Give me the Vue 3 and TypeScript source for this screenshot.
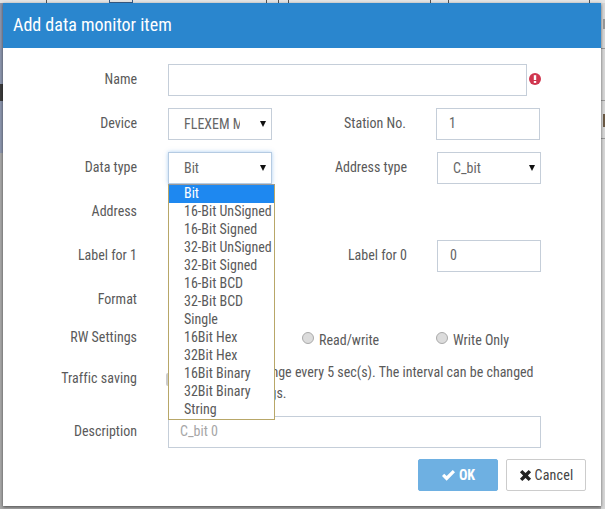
<script setup lang="ts">
// 数据类型下拉选项
const typeOptions: string[] = [
  "Bit",
  "16-Bit UnSigned",
  "16-Bit Signed",
  "32-Bit UnSigned",
  "32-Bit Signed",
  "16-Bit BCD",
  "32-Bit BCD",
  "Single",
  "16Bit Hex",
  "32Bit Hex",
  "16Bit Binary",
  "32Bit Binary",
  "String",
];

// x positions of the dark marks showing above the dialog
const topTicks: number[] = [46, 266, 278, 288, 430, 448, 589];
</script>

<template>
  <div class="page">
    <!-- slivers of the page behind the dialog -->
    <i v-for="x in topTicks" :key="x" class="bg bg-tick" :style="{ left: `${x}px` }"></i>
    <i class="bg bg-box"></i>
    <i class="bg bg-blue"></i>
    <i class="bg bg-dark"></i>
    <i class="bg bg-line line-a"></i>
    <i class="bg bg-line line-b"></i>
    <i class="bg bg-line line-c"></i>
    <i class="bg bg-mark mark-c"></i>
    <i class="bg bg-mark mark-i"></i>

    <div class="modal">
      <header class="modal-head">Add data monitor item</header>
      <div class="modal-body">
        <div class="row">
          <label class="lbl">Name</label>
          <input class="ctl name" type="text" />
          <svg class="warn" viewBox="0 0 12 12" width="12" height="12">
            <circle cx="6" cy="6" r="6" fill="#d0364f" />
            <rect x="4.8" y="2.2" width="2.4" height="4.8" fill="#fff" />
            <rect x="4.8" y="8" width="2.4" height="1.9" fill="#fff" />
          </svg>
        </div>
        <div class="row">
          <label class="lbl">Device</label>
          <div class="ctl sel small"><span class="clip device">FLEXEM MQTT</span><i class="arrow"></i></div>
          <label class="lbl lbl2">Station No.</label>
          <input class="ctl small" type="text" value="1" />
        </div>
        <div class="row">
          <label class="lbl">Data type</label>
          <div class="sel-wrap">
            <div class="ctl sel small focus"><span class="clip">Bit</span><i class="arrow"></i></div>
            <ul class="menu">
              <li v-for="(opt, i) in typeOptions" :key="opt" :class="{ on: i === 0 }">{{ opt }}</li>
            </ul>
          </div>
          <label class="lbl lbl2 shift">Address type</label>
          <div class="ctl sel small"><span class="clip">C_bit</span><i class="arrow"></i></div>
        </div>
        <div class="row">
          <label class="lbl">Address</label>
        </div>
        <div class="row">
          <label class="lbl">Label for 1</label>
          <span class="spacer"></span>
          <label class="lbl lbl2 shift">Label for 0</label>
          <input class="ctl small" type="text" value="0" />
        </div>
        <div class="row">
          <label class="lbl">Format</label>
        </div>
        <div class="row rw">
          <label class="lbl">RW Settings</label>
          <div class="radios">
            <span class="radio first"><i class="dot"></i></span>
            <span class="radio second"><i class="dot"></i>Read/write</span>
            <span class="radio"><i class="dot"></i>Write Only</span>
          </div>
        </div>
        <div class="row traffic">
          <label class="lbl">Traffic saving</label>
          <span class="check"></span>
          <p class="note">Collect data change every 5 sec(s). The interval can be changed<br />in system settings.</p>
        </div>
        <div class="row desc">
          <label class="lbl">Description</label>
          <input class="ctl wide" type="text" placeholder="C_bit 0" />
        </div>
      </div>
      <footer class="modal-foot">
        <button class="btn ok">
          <svg viewBox="0 0 16 14" width="15" height="13"><path d="M1 7.5 3.4 5 6 7.6 12.6 1 15 3.4 6 12.6z" fill="#fff" /></svg>
          OK
        </button>
        <button class="btn cancel">
          <svg viewBox="0 0 14 14" width="13" height="13"><path d="M1 3.6 3.6 1 7 4.4 10.4 1 13 3.6 9.6 7 13 10.4 10.4 13 7 9.6 3.6 13 1 10.4 4.4 7z" fill="#222" /></svg>
          Cancel
        </button>
      </footer>
    </div>
  </div>
</template>

<style>
html, body { margin: 0; background: #a8a8a8; }
</style>

<style scoped>
.page {
  position: relative;
  width: 605px;
  height: 509px;
  padding: 3px 4px 3px 3px;
  box-sizing: border-box;
  overflow: hidden;
  font-family: Roboto, "Liberation Sans", sans-serif;
  font-stretch: condensed;
  font-size: 14px;
  color: #5a5a5a;
  background: linear-gradient(#e4e4e4 0 3px, transparent 3px),
    linear-gradient(90deg, transparent 601px, #d6d6d6 601px);
}
.bg { position: absolute; display: block; }
.bg-tick { top: 0; width: 1px; height: 3px; background: #555; }
.bg-box { top: 0; left: 109px; width: 24px; height: 3px; box-sizing: border-box; border: 1px solid #3a5f8a; border-top: 0; }
.bg-blue { left: 0; top: 3px; width: 3px; height: 150px; background: #8c96ad; }
.bg-dark { left: 0; top: 84px; width: 3px; height: 17px; background: #3c3c3c; }
.bg-line { left: 601px; width: 4px; height: 1px; background: #999; }
.line-a { top: 48px; }
.line-b { top: 100px; }
.line-c { top: 138px; }
.bg-mark { left: 603px; width: 2px; background: #6b5a45; }
.mark-c { top: 19px; height: 10px; background: #999; }
.mark-i { top: 114px; height: 13px; }
.modal {
  position: relative;
  height: 503px;
  background: #fff;
  display: flex;
  flex-direction: column;
  box-shadow: 0 1px 3px rgba(0, 0, 0, 0.55);
}
.modal-head {
  height: 45px;
  flex: none;
  background: #2a86ce;
  color: #fff;
  font-size: 18px;
  line-height: 43px;
  padding-left: 10px;
}
.modal-body { padding-top: 16px; flex: 1; }
.row { display: flex; align-items: center; height: 32px; margin-bottom: 12px; }
.lbl { width: 134px; text-align: right; flex: none; margin-right: 31px; margin-bottom: 2px; }
.lbl2 { width: 108px; margin-left: 26px; margin-right: 30px; }
.lbl2.shift { margin-left: 27px; }
.ctl {
  box-sizing: border-box;
  height: 32px;
  border: 1px solid #c5ced9;
  background: #fff;
  font: inherit;
  font-stretch: condensed;
  color: #666;
  padding: 0 12px 2px;
  outline: none;
  border-radius: 0;
  flex: none;
}
.ctl::placeholder { color: #a6a6a6; opacity: 1; }
.name { width: 359px; }
.small { width: 104px; }
.wide { width: 373px; padding-left: 11px; }
.sel { display: flex; align-items: center; justify-content: space-between; padding: 0 5px 0 15px; }
.clip { overflow: hidden; white-space: nowrap; width: 60px; margin-bottom: 1px; }
.clip.device { width: 56px; }
.arrow { width: 0; height: 0; border: 3.5px solid transparent; border-top: 6px solid #111; border-bottom: 0; }
.focus { border-color: #b5cbe2; box-shadow: 0 0 4px rgba(90, 160, 230, 0.5); }
.warn { margin: 0 0 2px 2px; }
.spacer { width: 104px; flex: none; }
.sel-wrap { position: relative; flex: none; width: 104px; }
.menu {
  position: absolute;
  left: 0;
  top: 32px;
  z-index: 5;
  width: 107px;
  box-sizing: border-box;
  margin: 0;
  padding: 0;
  list-style: none;
  background: #fff;
  border: 1px solid #b8a768;
  border-top-color: #999;
}
.menu li { height: 18px; line-height: 16px; padding-left: 15px; white-space: nowrap; }
.menu li.on { background: #1e88f0; color: #fff; }
.rw { height: 20px; margin-bottom: 14px; }
.radios { display: flex; margin-top: 3px; }
.radio { display: flex; align-items: flex-start; line-height: 16px; }
.radio.first { width: 134px; }
.radio.second { width: 134px; }
.dot {
  width: 12px;
  height: 12px;
  border-radius: 50%;
  background: #dcdcdc;
  border: 1px solid #aaa;
  box-sizing: border-box;
  margin: 0 5px 0 0;
}
.traffic { align-items: flex-start; height: 43px; margin-bottom: 11px; }
.traffic .lbl { margin-top: 8px; margin-right: 29px; letter-spacing: 0.05px; }
.note { margin: 0; line-height: 21px; }
.check { width: 13px; height: 13px; background: #ccc; border-radius: 2px; margin: 11px 3px 0 0; flex: none; }
.desc { margin-bottom: 0; }
.desc .lbl { margin-bottom: 3px; }
.modal-foot { display: flex; justify-content: flex-end; gap: 8px; padding: 0 15px 15px 0; }
.btn {
  box-sizing: border-box;
  width: 80px;
  height: 32px;
  border-radius: 2px;
  font: inherit;
  font-stretch: condensed;
  display: flex;
  align-items: center;
  justify-content: center;
  gap: 3px;
  padding: 0;
}
.ok { background: #6eb0e2; border: 1px solid #6eb0e2; color: #fff; font-weight: 700; }
.cancel { background: #fff; border: 1px solid #ccc; color: #444; letter-spacing: 0.2px; }
</style>
